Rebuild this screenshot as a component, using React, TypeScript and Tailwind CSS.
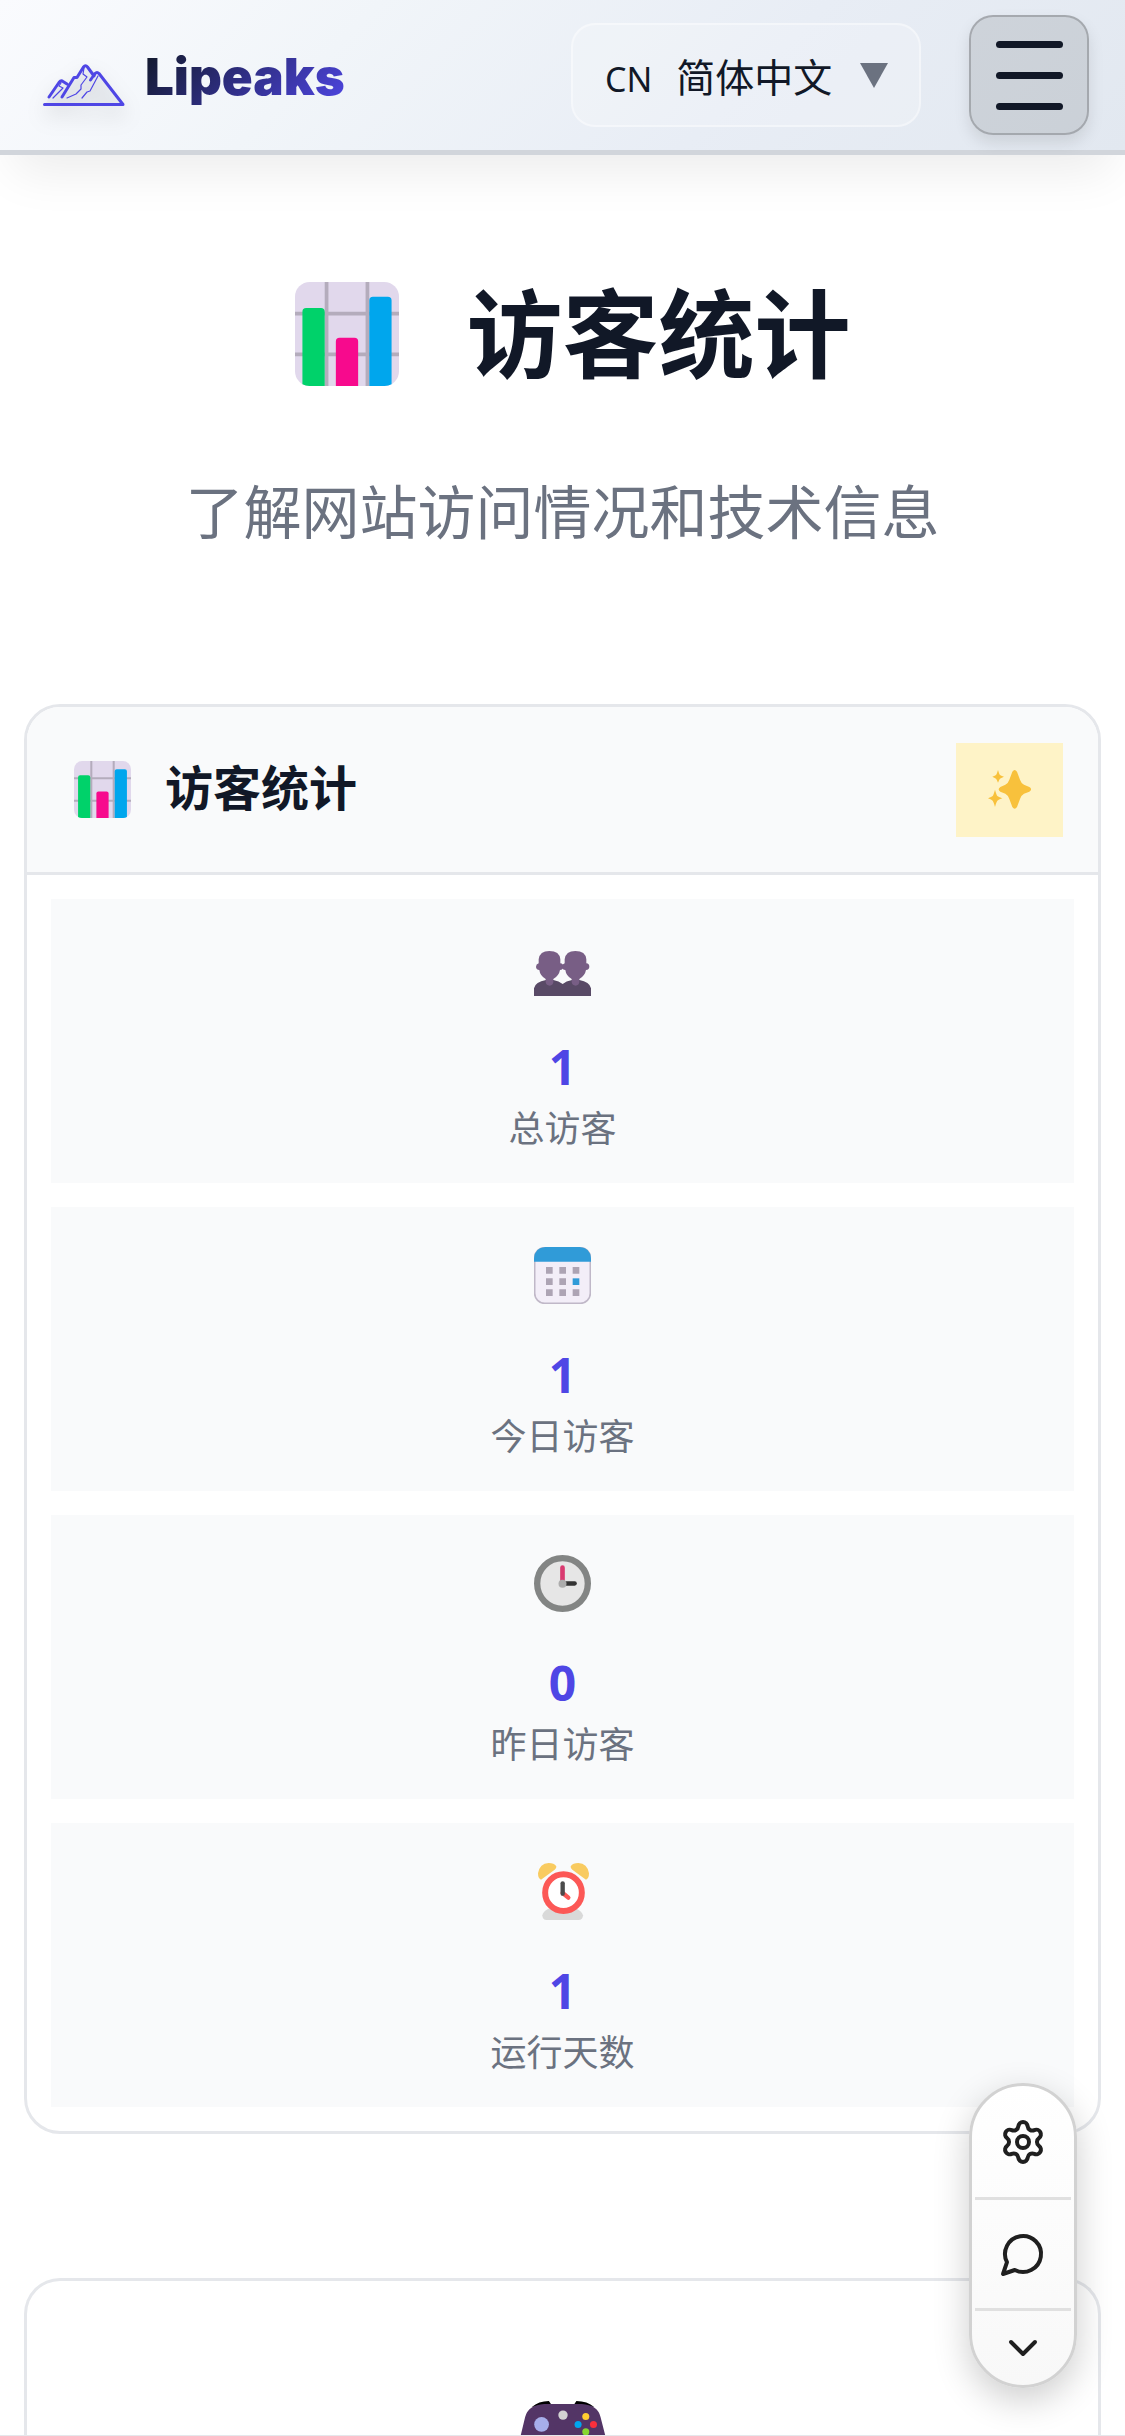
import type { ReactNode } from "react";
import { ChevronDown, Settings } from "lucide-react";

function BarChartIcon({ className }: { className: string }) {
  return (
    <svg viewBox="2 2 28 28" className={className} aria-hidden="true">
      <rect x="2" y="2" width="28" height="28" rx="4" fill="#e1d8ec" />
      <path d="M10 2h1v28h-1zM21 2h1v28h-1zM2 10h28v1H2zM2 21h28v1H2z" fill="#b4acbc" />
      <path d="M4 10a1 1 0 0 1 1-1h4a1 1 0 0 1 1 1v20H6a4 4 0 0 1-2-.5z" fill="#00d26a" />
      <path d="M13 18a1 1 0 0 1 1-1h4a1 1 0 0 1 1 1v12h-6z" fill="#f70a8d" />
      <path d="M22 7a1 1 0 0 1 1-1h4a1 1 0 0 1 1 1v22.500a4 4 0 0 1-2 .5h-4z" fill="#00a6ed" />
    </svg>
  );
}

function MountainLogo() {
  return (
    <svg
      viewBox="0 0 82 43"
      className="h-[43px] w-[82px] drop-shadow-[0_10px_10px_rgba(0,0,0,0.18)]"
      fill="none"
      stroke="#4f46e5"
      strokeLinecap="round"
      strokeLinejoin="round"
      aria-hidden="true"
    >
      <path d="M2 41 L6 33 L17 17 L24 21 L31 13 L42 2 L54 9 L80 40z" fill="#64748b" fillOpacity="0.06" stroke="none" />
      <path d="M1.500 40.500H80L56 9.500Q54 7.500 52 9.500L51 12L44.500 3Q42.500 .5 40.500 3L34 13.500H31L19 33M6 33L16 18.500Q18 16 20 17.500L24 20M51 11L47.500 16" strokeWidth="3" />
      <path d="M41 4L40 10L44 13L38 21V25L33 30L24 34M55 12L47 27L44 28L39 34M18 19L16 22L20 24L15 29L10 34" strokeWidth="1.200" />
    </svg>
  );
}

function SparklesIcon() {
  return (
    <svg viewBox="0 0 129 117" className="h-[39px] w-[43px]" fill="#f8c13c" aria-hidden="true">
      <path d="M73 5Q80-5 87 5L96 29Q99 39 108 44L124 51Q135 58 124 65L108 71Q99 76 96 87L87 111Q80 121 73 111L64 87Q61 76 52 71L37 65Q27 58 37 51L52 44Q61 39 64 29Z" />
      <path d="M30 0Q34 13 36 15Q38 17 48 20Q38 24 36 26Q34 28 30 38Q26 28 24 26Q22 24 13 20Q22 17 24 15Q26 13 30 0Z" />
      <path d="M21 59Q25 74 28 78Q31 81 43 85Q31 89 28 92Q25 96 21 111Q17 96 14 92Q11 89 0 85Q11 81 14 78Q17 74 21 59Z" />
    </svg>
  );
}

function PeopleIcon() {
  return (
    <svg viewBox="0 -36 171 171" className="size-[57px]" aria-hidden="true">
      <path d="M0 135V112Q4 92 36 87H58Q75 90 86 99Q96 90 114 87H136Q167 92 171 112V135Z" fill="#594a66" />
      <g fill="#785e85">
        <path id="head" d="M46 0Q77 0 79 25V37Q88 38 88 47Q88 56 78 57Q75 74 58 84V94Q56 104 47 104Q37 104 35 94V84Q18 74 16 57Q6 55 6 47Q6 39 14 37V25Q17 0 46 0Z" />
        <use href="#head" x="78" />
      </g>
    </svg>
  );
}

function CalendarIcon() {
  return (
    <svg viewBox="0 0 171 171" className="size-[57px]" aria-hidden="true">
      <rect x="2" y="2" width="167" height="167" rx="30" fill="#f3eef8" stroke="#c0b8c8" strokeWidth="5" />
      <path d="M0 44V34Q2 2 34 0H137Q169 2 171 34V44Z" fill="#309bd8" />
      <path d="M36 60h20v20H36zM76 60h20v20H76zM116 60h20v20H116zM36 94h20v20H36zM76 94h20v20H76zM36 127h20v20H36zM76 127h20v20H76zM116 127h20v20H116z" fill="#ada4b4" />
      <path d="M116 94h20v20H116z" fill="#309bd8" />
    </svg>
  );
}

function ClockIcon() {
  return (
    <svg viewBox="0 0 171 171" className="size-[57px]" aria-hidden="true">
      <circle cx="85.500" cy="85.500" r="76" fill="#e6e6e6" stroke="#838584" strokeWidth="19" />
      <path d="M90 85.500H122" stroke="#333333" strokeWidth="13" strokeLinecap="round" />
      <path d="M85.500 80V38" stroke="#d93a70" strokeWidth="14" strokeLinecap="round" />
      <circle cx="85.500" cy="86" r="12" fill="#acacac" />
    </svg>
  );
}

function AlarmIcon() {
  return (
    <svg viewBox="0 0 171 171" className="size-[57px]" aria-hidden="true">
      <path d="M25 157Q27 145 43 137H128Q144 145 147 157Q147 171 133 171H38Q25 171 25 157Z" fill="#d9d9d9" />
      <path d="M21 50Q12 47 12 31Q17 1 44 0Q60 0 67 10Q68 16 62 20Z" fill="#f9cb60" />
      <path d="M156 50Q165 47 165 31Q160 1 133 0Q117 0 110 10Q109 16 115 20Z" fill="#f9cb60" />
      <circle cx="88.500" cy="89" r="55" fill="#fff" stroke="#fc5856" strokeWidth="18" />
      <path d="M86 90L103 104" stroke="#fc5856" strokeWidth="13" strokeLinecap="round" />
      <path d="M86 61V92" stroke="#4b4b4b" strokeWidth="13" strokeLinecap="round" />
    </svg>
  );
}

function GamepadIcon() {
  return (
    <svg viewBox="0 0 256 200" className="h-[67px] w-[86px]" aria-hidden="true">
      <path d="M35 18Q55 0 86 0L94 12ZM221 18Q201 0 168 0L160 12Z" fill="#000" />
      <path d="M72 9H184Q232 12 240 48L256 110V200H0V110L15 48Q24 12 72 9Z" fill="#533566" />
      <circle cx="64" cy="70" r="22" fill="#a6aeea" />
      <circle cx="128" cy="42" r="14" fill="#d3d3d3" />
      <circle cx="196" cy="46" r="10.500" fill="#ffce31" />
      <circle cx="173" cy="70" r="10.500" fill="#00a6ed" />
      <circle cx="219" cy="70" r="10.500" fill="#f92f3c" />
      <circle cx="196" cy="92" r="10.500" fill="#86d72f" />
    </svg>
  );
}

function ChatIcon() {
  return (
    <svg viewBox="0 0 24 24" className="size-12" fill="none" stroke="currentColor" strokeWidth="2" strokeLinecap="round" strokeLinejoin="round" aria-hidden="true">
      <path d="M7.900 20A9 9 0 1 0 4 16.100L2 22Z" />
    </svg>
  );
}

function Stat({ icon, value, label }: { icon: ReactNode; value: string; label: string }) {
  return (
    <li className="flex h-[284px] flex-col items-center bg-[#f9fafb] pt-10">
      {icon}
      <strong className="mt-[43px] font-['Noto_Sans',sans-serif] text-5xl leading-[56px] font-bold text-[#4f46e5]">{value}</strong>
      <span className="mt-[7px] text-4xl leading-[56px] text-[#6b7280]">{label}</span>
    </li>
  );
}

export default function App() {
  return (
    <div className="flex h-screen flex-col overflow-hidden border-b border-gray-200 bg-white font-['Liberation_Sans','Noto_Sans_CJK_SC',sans-serif] text-[#111827]">
      <header className="relative z-10 flex shrink-0 items-center border-b-[5px] border-[#d1d5db] bg-[linear-gradient(135deg,#fafbfe_0%,#f1f5f9_30%,#e8edf5_65%,#e2e8f0_100%)] py-[15px] pr-9 pl-[43px] shadow-[0_30px_50px_-14px_rgba(0,0,0,0.08)]">
        <a href="#home" className="flex items-center gap-5 pt-1">
          <span className="pt-4"><MountainLogo /></span>
          <span className="bg-[linear-gradient(135deg,#111827,#4f46e5)] bg-clip-text font-['Inter',sans-serif] text-[51px] leading-[60px] font-black text-transparent">Lipeaks</span>
        </a>
        <button type="button" className="ml-auto flex h-[104px] w-[350px] shrink-0 items-center rounded-3xl border-2 border-white/40 bg-white/20 pl-8">
          <span className="pt-2 font-['Noto_Sans',sans-serif] text-[34px] leading-10">CN</span>
          <span className="ml-6 pt-2 text-[39px] leading-[56px]">简体中文</span>
          <svg viewBox="0 0 28 25" className="ml-7 h-[25px] w-7 fill-[#6b7280]" aria-hidden="true"><path d="M0 0H28L14 25Z" /></svg>
        </button>
        <button type="button" aria-label="菜单" className="ml-12 flex size-[120px] shrink-0 flex-col items-center justify-center gap-6 rounded-3xl border-2 border-black/20 bg-black/10 shadow-[0_8px_16px_rgba(0,0,0,0.1)]">
          <span className="h-[7px] w-[67px] rounded-full bg-[#111827]" />
          <span className="h-[7px] w-[67px] rounded-full bg-[#111827]" />
          <span className="h-[7px] w-[67px] rounded-full bg-[#111827]" />
        </button>
      </header>

      <main className="flex min-h-0 flex-1 flex-col px-6">
        <section className="flex shrink-0 flex-col items-center pt-[107px]">
          <h1 className="flex items-center gap-17 pl-5 text-8xl leading-[138px] font-bold">
            <BarChartIcon className="size-[104px]" />
            <span className="pt-1.5">访客统计</span>
          </h1>
          <p className="mt-[62px] text-[58px] leading-[92px] text-[#6b7280]">了解网站访问情况和技术信息</p>
        </section>

        <section className="mt-36 shrink-0 overflow-hidden rounded-[36px] border-[3px] border-gray-200 bg-white">
          <div className="flex h-[168px] items-center justify-between border-b-[3px] border-gray-200 bg-[#f9fafb] pr-[35px] pl-[47px]">
            <h2 className="flex items-center gap-[34px] text-5xl leading-[72px] font-bold">
              <BarChartIcon className="size-[57px]" />
              访客统计
            </h2>
            <span className="flex h-[94px] w-[107px] items-center justify-center bg-[#fef3c7]"><SparklesIcon /></span>
          </div>
          <ul className="flex flex-col gap-6 p-6">
            <Stat icon={<PeopleIcon />} value="1" label="总访客" />
            <Stat icon={<CalendarIcon />} value="1" label="今日访客" />
            <Stat icon={<ClockIcon />} value="0" label="昨日访客" />
            <Stat icon={<AlarmIcon />} value="1" label="运行天数" />
          </ul>
        </section>

        <section className="mt-36 flex min-h-0 flex-1 justify-center overflow-hidden rounded-t-[36px] border-[3px] border-b-0 border-gray-200 bg-white pt-[120px]">
          <GamepadIcon />
        </section>
      </main>

      <nav className="fixed right-12 bottom-12 z-20 flex w-[108px] flex-col divide-y-[3px] divide-[#e0e0e0] rounded-full border-[3px] border-[#d2d2d2] bg-linear-to-b from-white to-[#f8f8f8] px-[3px] text-[#1f1f1f] shadow-[0_12px_36px_rgba(0,0,0,0.2)]">
        <button type="button" aria-label="设置" className="flex h-[114px] items-center justify-center"><Settings className="size-12" /></button>
        <button type="button" aria-label="评论" className="flex h-[111px] items-center justify-center"><ChatIcon /></button>
        <button type="button" aria-label="收起" className="flex h-[74px] items-center justify-center"><ChevronDown className="size-12" /></button>
      </nav>
    </div>
  );
}
